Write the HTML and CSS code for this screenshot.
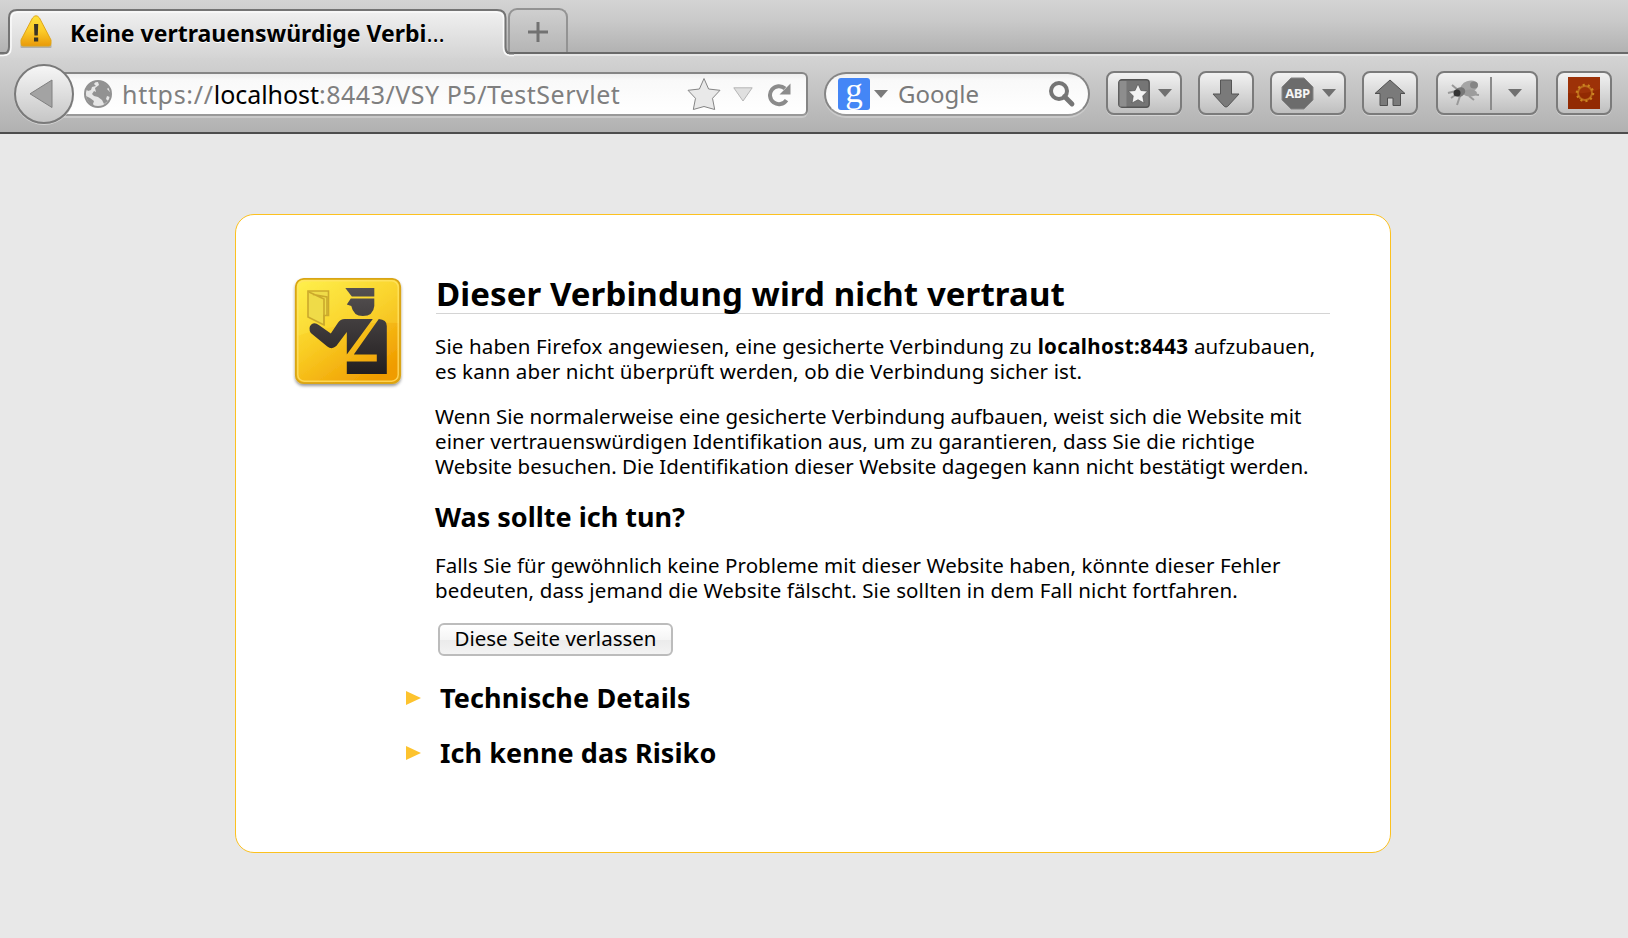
FILE: index.html
```html
<!DOCTYPE html>
<html lang="de">
<head>
<meta charset="utf-8">
<title>Keine vertrauenswürdige Verbindung</title>
<link rel="stylesheet" href="styles.css">
</head>
<body>
<header class="chrome">
  <div class="tabstrip">
    <div class="tab">
      <svg class="tab-shape" width="514" height="50" viewBox="0 0 514 50">
        <defs><linearGradient id="tg" x1="0" y1="0" x2="0" y2="1"><stop offset="0" stop-color="#f1f1f1"/><stop offset="1" stop-color="#d4d4d4"/></linearGradient></defs>
        <path d="M0 50V47H3Q9 47 9 40V10Q9 2 17 2H497Q505 2 505 10V40Q505 47 511 47H514V50Z" fill="url(#tg)"/>
        <path d="M0 47.500H3Q11 47.500 11 40V11Q11 4 18 4H496Q503.500 4 503.500 11V40Q503.500 47.500 511 47.500H514" fill="none" stroke="#fafafa" stroke-width="1.500"/>
        <path d="M0 45.500H3Q9 45.500 9 39V10Q9 2 17 2H497Q505.500 2 505.500 10V39Q505.500 45.500 511 45.500H514" fill="none" stroke="#747474" stroke-width="2"/>
      </svg>
      <svg class="warn" width="34" height="34" viewBox="0 0 34 34">
        <defs><linearGradient id="wg" x1="0" y1="0" x2="0" y2="1"><stop offset="0" stop-color="#ffe23a"/><stop offset=".5" stop-color="#fccb28"/><stop offset="1" stop-color="#e99a09"/></linearGradient></defs>
        <rect x="1.500" y="29" width="31" height="4" rx="1" fill="#8a8578" opacity=".5"/>
        <path d="M13.500 3Q17 -1.500 20.500 3L32 25V28.500Q32 31 30 31H4Q2 31 2 28.500V25Z" fill="url(#wg)" stroke="#dfa51a" stroke-width="1"/>
        <path d="M15 9h4.200l-.4 11.500h-3.400zM15 22.500h4.200v4h-4.200z" fill="#3b3526"/>
      </svg>
      <span class="tab-title">Keine vertrauenswürdige Verbi<span class="dots">…</span></span>
    </div>
    <div class="newtab">
      <svg width="22" height="22" viewBox="0 0 22 22"><path d="M9.500 1h3v8.500H21v3h-8.500V21h-3v-8.500H1v-3h8.500z" fill="#727272"/></svg>
    </div>
  </div>
  <div class="toolbar">
    <div class="back">
      <svg width="24" height="30" viewBox="0 0 24 30"><path d="M23 1V28.500L1 14.800Z" fill="#a3a3a3" stroke="#808080"/></svg>
    </div>
    <div class="urlbar">
      <svg class="globe" width="30" height="30" viewBox="0 0 30 30">
        <circle cx="15" cy="15" r="13" fill="#e6e6e6" stroke="#929292" stroke-width="2"/>
        <path d="M3 10Q6 3 13 2L11 5 13 7 9 8 8 11 5 12ZM12 9L16 6 15 3 20 3 26 8 24 10 27 13 27 18 24 17 23 20 25 22 21 25 19 21 15 18 11 17 9 15 11 12 13 13ZM3 17L7 19 11 22 10 25 12 28Q5 25 3 17Z" fill="#929292"/>
      </svg>
      <span class="url"><span class="scheme">https://</span><b>localhost</b><span class="path">:8443/VSY P5/TestServlet</span></span>
      <svg class="star" width="34" height="34" viewBox="0 0 34 34"><path d="M17 1.500L21.600 12 33 13.300 25.500 21.300 27.700 32.500 17 29.500 6.300 32.500 8.500 21.300 1 13.300 12.400 12Z" fill="#e9e9e9" stroke="#858585" stroke-linejoin="round"/></svg>
      <svg class="drop" width="20" height="15" viewBox="0 0 20 15"><path d="M.8.8H19.200L10 14Z" fill="#e0e0e0" stroke="#b5b5b5"/></svg>
      <svg class="reload" width="24" height="25" viewBox="0 0 24 25"><path d="M18.500 18.200A9 9 0 1 1 17 6.500" fill="none" stroke="#8b8b8b" stroke-width="4"/><path d="M22.500 1.500V12.500H11.500Z" fill="#8b8b8b"/></svg>
    </div>
    <div class="search">
      <span class="g">g</span>
      <svg class="sdrop" width="14" height="8" viewBox="0 0 14 8"><path d="M0 0H14L7 8Z" fill="#7b7b7b"/></svg>
      <span class="placeholder">Google</span>
      <svg class="lens" width="28" height="28" viewBox="0 0 28 28"><circle cx="11" cy="11" r="8" fill="none" stroke="#767676" stroke-width="4"/><path d="M16.500 16.500L24 24" stroke="#767676" stroke-width="4.800" stroke-linecap="round"/></svg>
    </div>
    <div class="btn b1">
      <svg width="32" height="29" viewBox="0 0 32 29"><rect x=".8" y=".8" width="30.400" height="27.400" rx="3" fill="#757575" stroke="#555" stroke-width="1.400"/><path d="M1.500 2H8.500V27.500H1.500Z" fill="#8d8d8d"/><path d="M20 5L22.900 11.500 29.500 12.200 24.700 17 26 24 20 20.700 14 24 15.300 17 10.500 12.200 17.100 11.500Z" fill="#f3f3f3" stroke="#4a4a4a" stroke-width=".6"/></svg>
      <svg width="14" height="8" viewBox="0 0 14 8"><path d="M0 0H14L7 8Z" fill="#707070"/></svg>
    </div>
    <div class="btn b2">
      <svg width="28" height="29" viewBox="0 0 28 29"><path d="M8.500 1H19.500V15H27L15.500 27.500Q14 28.500 12.500 27.500L1 15H8.500Z" fill="#7a7a7a" stroke="#555" stroke-width="1"/></svg>
    </div>
    <div class="btn b3">
      <div class="stop">
        <svg width="33" height="33" viewBox="0 0 33 33"><path d="M10 1H23L32 10V23L23 32H10L1 23V10Z" fill="#6c6c6c" stroke="#858585"/></svg>
        <span class="abp">ABP</span>
      </div>
      <svg width="14" height="8" viewBox="0 0 14 8"><path d="M0 0H14L7 8Z" fill="#707070"/></svg>
    </div>
    <div class="btn b4">
      <svg width="32" height="28" viewBox="0 0 32 28"><path d="M16 1L31 14.500H26.500V26.500H19V19H13.500V26.500H6V14.500H1Z" fill="#7a7a7a" stroke="#505050" stroke-width="1"/></svg>
    </div>
    <div class="btn b5">
      <svg class="bug" width="34" height="28" viewBox="0 0 34 28"><g fill="none" stroke="#999" stroke-width="2"><path d="M1 14L9 12M4 19L10 15M10 26L13 17M22 17L27 21M24 15L32 16M5 6L11 11"/></g><ellipse cx="22" cy="8" rx="9" ry="6" transform="rotate(-20 22 8)" fill="#a5a5a5"/><ellipse cx="27" cy="6" rx="4" ry="3.500" fill="#858585"/><ellipse cx="23" cy="14" rx="7" ry="3.500" fill="#9c9c9c"/><ellipse cx="13" cy="13" rx="5.500" ry="4.500" transform="rotate(-30 13 13)" fill="#777"/><circle cx="10" cy="14" r="3.500" fill="#333"/></svg>
      <i class="sep"></i>
      <svg width="14" height="8" viewBox="0 0 14 8"><path d="M0 0H14L7 8Z" fill="#707070"/></svg>
    </div>
    <div class="btn b6">
      <svg width="32" height="32" viewBox="0 0 32 32"><rect width="32" height="32" fill="#922a02"/><path d="M0 0H32V12Q16 18 0 16Z" fill="#9d3208"/><circle cx="17" cy="16" r="7" fill="none" stroke="#b9681a" stroke-width="2"/><circle cx="17" cy="16" r="8" fill="none" stroke="#cb8420" stroke-width="2.500" stroke-dasharray="2 3.030"/></svg>
    </div>
  </div>
</header>
<main class="page">
  <section class="card">
    <svg class="officer" width="112" height="114" viewBox="0 0 112 114">
      <defs>
        <linearGradient id="og" x1="0" y1="0" x2=".7" y2="1"><stop offset="0" stop-color="#fff04a"/><stop offset=".5" stop-color="#f9cd24"/><stop offset="1" stop-color="#f09c00"/></linearGradient>
        <linearGradient id="dg" gradientUnits="userSpaceOnUse" x1="0" y1="12" x2="0" y2="98"><stop offset="0" stop-color="#555152"/><stop offset=".45" stop-color="#3f3b3c"/><stop offset="1" stop-color="#231f20"/></linearGradient>
        <filter id="sh" x="-10%" y="-10%" width="120%" height="125%"><feDropShadow dx="0" dy="2" stdDeviation="1.800" flood-color="#000" flood-opacity=".4"/></filter>
      </defs>
      <rect x="3.800" y="3.800" width="104.400" height="104.400" rx="8" fill="url(#og)" stroke="#d9a514" stroke-width="1.800" filter="url(#sh)"/>
      <rect x="5.800" y="5.800" width="100.400" height="100.400" rx="6.500" fill="none" stroke="#ffe069" stroke-width="1.500" opacity=".8"/>
      <path d="M5 61Q50 46 107 48V12Q107 5 100 5H12Q5 5 5 12Z" fill="#fff45a" opacity=".2"/>
      <path d="M16 16H36.500V40.500H32V50L16 42Z" fill="#efdb48" stroke="#cba92c" stroke-width="1.600"/>
      <path d="M17 17L32 24V50M21 19.500L35 22V40" fill="none" stroke="#cba92c" stroke-width="1.600"/>
      <g fill="url(#dg)" transform="translate(.8 0)">
        <path d="M52.500 13H81.500V21.500H59Z"/>
        <path d="M58 23.500H81.500V31Q80.500 41 70 41Q60.500 41 58.500 31L54 29.500Z"/>
        <path d="M52 44H80L54 79.500V57L43.500 71Q39 75 34.500 71.500L18 58Q15 53 18.500 49.500Q22 47 26 50L38 58.500L45 48Q47.500 44 52 44Z"/>
        <path d="M86 44Q94 44.500 94 51V99H54V86.500H84V79.500H61Z"/>
      </g>
    </svg>
    <div class="content">
      <h1>Dieser Verbindung wird nicht vertraut</h1>
      <p class="p1"><span class="line l1">Sie haben Firefox angewiesen, eine gesicherte Verbindung zu <b>localhost:8443</b> aufzubauen,</span>
      <span class="line l2">es kann aber nicht überprüft werden, ob die Verbindung sicher ist.</span></p>
      <p class="p2"><span class="line l3">Wenn Sie normalerweise eine gesicherte Verbindung aufbauen, weist sich die Website mit</span>
      <span class="line l4">einer vertrauenswürdigen Identifikation aus, um zu garantieren, dass Sie die richtige</span>
      <span class="line l5">Website besuchen. Die Identifikation dieser Website dagegen kann nicht bestätigt werden.</span></p>
      <h2 class="h2a">Was sollte ich tun?</h2>
      <p class="p3"><span class="line l6">Falls Sie für gewöhnlich keine Probleme mit dieser Website haben, könnte dieser Fehler</span>
      <span class="line l7">bedeuten, dass jemand die Website fälscht. Sie sollten in dem Fall nicht fortfahren.</span></p>
      <button class="leave">Diese Seite verlassen</button>
      <h2 class="exp e1"><i class="arrow"></i><span>Technische Details</span></h2>
      <h2 class="exp e2"><i class="arrow"></i><span>Ich kenne das Risiko</span></h2>
    </div>
  </section>
</main>
</body>
</html>
```
FILE: styles.css
```css
* { box-sizing: border-box; }
body { margin: 0; width: 1628px; height: 938px; overflow: hidden; background: #e8e8e8; color: #000; font-family: "Noto Sans", "Open Sans", sans-serif; font-variant-ligatures: none; }
svg { display: block; flex: none; }
.chrome { height: 134px; background: linear-gradient(#d4d4d4 56px, #b1b1b1 132px); border-bottom: 2px solid #4d4d4d; }
.tabstrip { display: flex; height: 56px; padding-top: 8px; padding-left: 8px; background: linear-gradient(#d4d4d4, #cacaca 20px, #b2b2b2 52px, #696969 52px, #696969 54px, #e6e6e6 54px); }
.tab { position: relative; display: flex; align-items: flex-start; width: 498px; height: 48px; padding: 7px 0 0 11px; }
.tab-shape { position: absolute; left: -8px; top: 0; }
.warn, .tab-title { position: relative; }
.tab-title { margin-left: 17px; margin-top: 5px; font-size: 23px; line-height: 26px; font-weight: 700; white-space: nowrap; text-shadow: 0 1px #fff; }
.dots { font-weight: 400; }
.newtab { display: flex; justify-content: center; width: 60px; height: 44px; margin-left: 2px; padding-top: 11px; border: 2px solid #939393; border-bottom: 0; border-radius: 9px 9px 0 0; background: linear-gradient(#cfcfcf, #b5b5b5); }
.toolbar { display: flex; align-items: center; height: 76px; padding-left: 14px; }
.back { display: flex; align-items: center; justify-content: center; width: 60px; height: 60px; border: 2px solid #7a7a7a; border-radius: 50%; background: linear-gradient(#f6f6f6, #c6c6c6); z-index: 1; padding-right: 6px; box-shadow: 0 1px #d5d5d5; }
.urlbar { display: flex; align-items: center; width: 744px; height: 44px; margin-left: -10px; padding-left: 17px; border: 2px solid #858585; border-bottom-color: #999; border-radius: 0 6px 6px 0; background: linear-gradient(#eee, #f9f9f9 6px, #fff); box-shadow: 0 2px #cacaca; }
.url { flex: 1; margin-left: 9px; font-size: 25px; color: #7f7f7f; white-space: nowrap; line-height: 40px; }
.scheme { letter-spacing: .7px; }
.url b { font-weight: 400; color: #000; letter-spacing: -.05px; }
.path { letter-spacing: .52px; }
.drop { margin-left: 12px; }
.reload { margin: 0 14px 0 15px; }
.search { display: flex; align-items: center; width: 266px; height: 44px; margin-left: 16px; padding-left: 12px; border: 2px solid #858585; border-bottom-color: #999; border-radius: 22px; background: linear-gradient(#eee, #f9f9f9 6px, #fff); box-shadow: 0 2px #cacaca; }
.g { width: 32px; height: 32px; border-radius: 3px; background: #4486f6; color: #fff; font: 35px/26px "Liberation Serif", serif; text-align: center; }
.sdrop { margin-left: 4px; }
.placeholder { flex: 1; margin-left: 10px; font-size: 24px; line-height: 40px; color: #7a7a7a; }
.lens { margin-right: 12px; }
.btn { display: flex; align-items: center; height: 44px; margin-top: -2px; border: 2px solid #7b7b7b; border-radius: 8px; background: linear-gradient(#f2f2f2, #bfbfbf); box-shadow: 0 1px #d5d5d5; }
.b1 { width: 76px; margin-left: 16px; padding-left: 10px; gap: 8px; }
.b2 { width: 56px; margin-left: 16px; justify-content: center; }
.b3 { width: 76px; margin-left: 16px; padding-left: 9px; gap: 8px; }
.b4 { width: 56px; margin-left: 16px; justify-content: center; }
.b5 { width: 102px; margin-left: 18px; padding-left: 9px; }
.b6 { width: 56px; margin-left: 18px; justify-content: center; }
.bug { filter: blur(.5px); }
.stop { display: grid; place-items: center; }
.stop > * { grid-area: 1 / 1; }
.abp { font: 700 13px/20px "Open Sans", sans-serif; letter-spacing: -.4px; color: #f5f5f5; }
.sep { width: 2px; height: 33px; margin: 0 16px 0 9px; background: #8b8b8b; }
.page { padding: 80px 0 0 235px; }
.card { display: flex; width: 1156px; height: 639px; padding-left: 56px; border: 1px solid #fcc11f; border-radius: 19px; background: #fff; }
.officer { margin-top: 60px; }
.content { width: 894px; margin-left: 32px; }
h1, h2, p { margin: 0; white-space: nowrap; }
h1 { height: 99px; padding-top: 56px; font-size: 33px; line-height: 45px; letter-spacing: .09px; border-bottom: 1px solid #d4d4d4; }
h2 { font-size: 27px; line-height: 36px; }
p { margin-left: -1px; font-size: 20.5px; line-height: 25px; }
.line { display: block; }
.l1 { letter-spacing: .13px; }
.l1 b { letter-spacing: .35px; }
.l2 { letter-spacing: .12px; }
.l3 { letter-spacing: .02px; }
.l4 { letter-spacing: .07px; }
.l5 { letter-spacing: .035px; }
.l6 { letter-spacing: .06px; }
.l7 { letter-spacing: .12px; }
.p1 { margin-top: 20px; }
.p2 { margin-top: 20px; }
.h2a { margin-top: 20px; margin-left: -1px; }
.p3 { margin-top: 18px; }
.leave { display: block; width: 235px; height: 33px; margin: 20px 0 0 2px; padding: 0 0 3px; font: 20.500px/26px "Noto Sans", sans-serif; color: #000; border: 2px solid #bcbcbc; border-radius: 6px; background: linear-gradient(#fff, #f5f5f5 50%, #ebebeb 51%, #f3f3f3); }
.exp { display: flex; align-items: center; margin-left: -30px; }
.e1 { margin-top: 24px; letter-spacing: .12px; }
.e2 { margin-top: 19px; letter-spacing: .07px; }
.arrow { width: 15px; height: 14px; margin-right: 19px; background: #fdc32e; clip-path: polygon(0 0, 100% 50%, 0 100%); }
```
